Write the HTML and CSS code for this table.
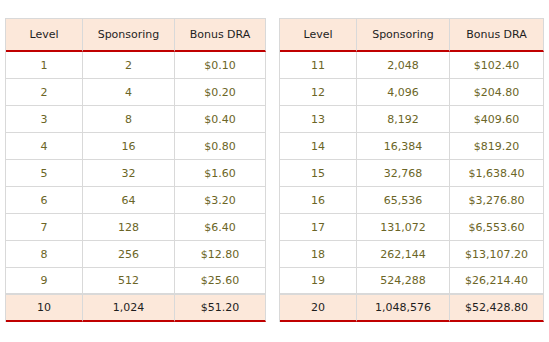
FILE: index.html
```html
<!DOCTYPE html>
<html>
<head>
<meta charset="utf-8">
<link rel="stylesheet" href="styles.css">
</head>
<body>
<div class="wrap">
  <table class="tbl tbl-left">
    <colgroup><col class="c1"><col class="c2"><col class="c3"></colgroup>
    <thead><tr><th>Level</th><th>Sponsoring</th><th>Bonus DRA</th></tr></thead>
    <tbody>
      <tr><td>1</td><td>2</td><td>$0.10</td></tr>
      <tr><td>2</td><td>4</td><td>$0.20</td></tr>
      <tr><td>3</td><td>8</td><td>$0.40</td></tr>
      <tr><td>4</td><td>16</td><td>$0.80</td></tr>
      <tr><td>5</td><td>32</td><td>$1.60</td></tr>
      <tr><td>6</td><td>64</td><td>$3.20</td></tr>
      <tr><td>7</td><td>128</td><td>$6.40</td></tr>
      <tr><td>8</td><td>256</td><td>$12.80</td></tr>
      <tr><td>9</td><td>512</td><td>$25.60</td></tr>
    </tbody>
    <tfoot><tr><td>10</td><td>1,024</td><td>$51.20</td></tr></tfoot>
  </table>
  <table class="tbl tbl-right">
    <colgroup><col class="c1"><col class="c2"><col class="c3"></colgroup>
    <thead><tr><th>Level</th><th>Sponsoring</th><th>Bonus DRA</th></tr></thead>
    <tbody>
      <tr><td>11</td><td>2,048</td><td>$102.40</td></tr>
      <tr><td>12</td><td>4,096</td><td>$204.80</td></tr>
      <tr><td>13</td><td>8,192</td><td>$409.60</td></tr>
      <tr><td>14</td><td>16,384</td><td>$819.20</td></tr>
      <tr><td>15</td><td>32,768</td><td>$1,638.40</td></tr>
      <tr><td>16</td><td>65,536</td><td>$3,276.80</td></tr>
      <tr><td>17</td><td>131,072</td><td>$6,553.60</td></tr>
      <tr><td>18</td><td>262,144</td><td>$13,107.20</td></tr>
      <tr><td>19</td><td>524,288</td><td>$26,214.40</td></tr>
    </tbody>
    <tfoot><tr><td>20</td><td>1,048,576</td><td>$52,428.80</td></tr></tfoot>
  </table>
</div>
</body>
</html>
```
FILE: styles.css
```css
html, body {
  margin: 0;
  padding: 0;
  background: #ffffff;
}
body {
  font-family: "DejaVu Sans", Verdana, sans-serif;
  font-size: 11px;
}
.wrap {
  display: flex;
  align-items: flex-start;
  gap: 13px;
  margin: 18px 0 0 5px;
}
.tbl {
  border-collapse: separate;
  border-spacing: 0;
  table-layout: fixed;
  border-top: 1px solid #d9d9d9;
  border-left: 1px solid #d9d9d9;
}
.tbl-left { width: 261px; }
.tbl-right { width: 265px; }
.tbl-left .c1 { width: 77px; }
.tbl-left .c2 { width: 92px; }
.tbl-left .c3 { width: 91px; }
.tbl-right .c1 { width: 77px; }
.tbl-right .c2 { width: 93px; }
.tbl-right .c3 { width: 94px; }
.tbl th, .tbl td {
  box-sizing: border-box;
  padding: 0;
  text-align: center;
  vertical-align: middle;
  border-right: 1px solid #d9d9d9;
  line-height: 13px;
}
.tbl th {
  height: 33px;
  background: #fce8da;
  color: #1e1e1e;
  font-weight: normal;
  border-bottom: 2px solid #c00000;
}
.tbl tbody td {
  height: 27px;
  color: #6b6526;
  border-bottom: 1px solid #d9d9d9;
}
.tbl tbody tr:last-child td {
  height: 27px;
  border-bottom: 2px solid #d9d9d9;
}
.tbl tfoot td {
  height: 27px;
  background: #fce8da;
  color: #1e1e1e;
  border-bottom: 2px solid #c00000;
}
```
